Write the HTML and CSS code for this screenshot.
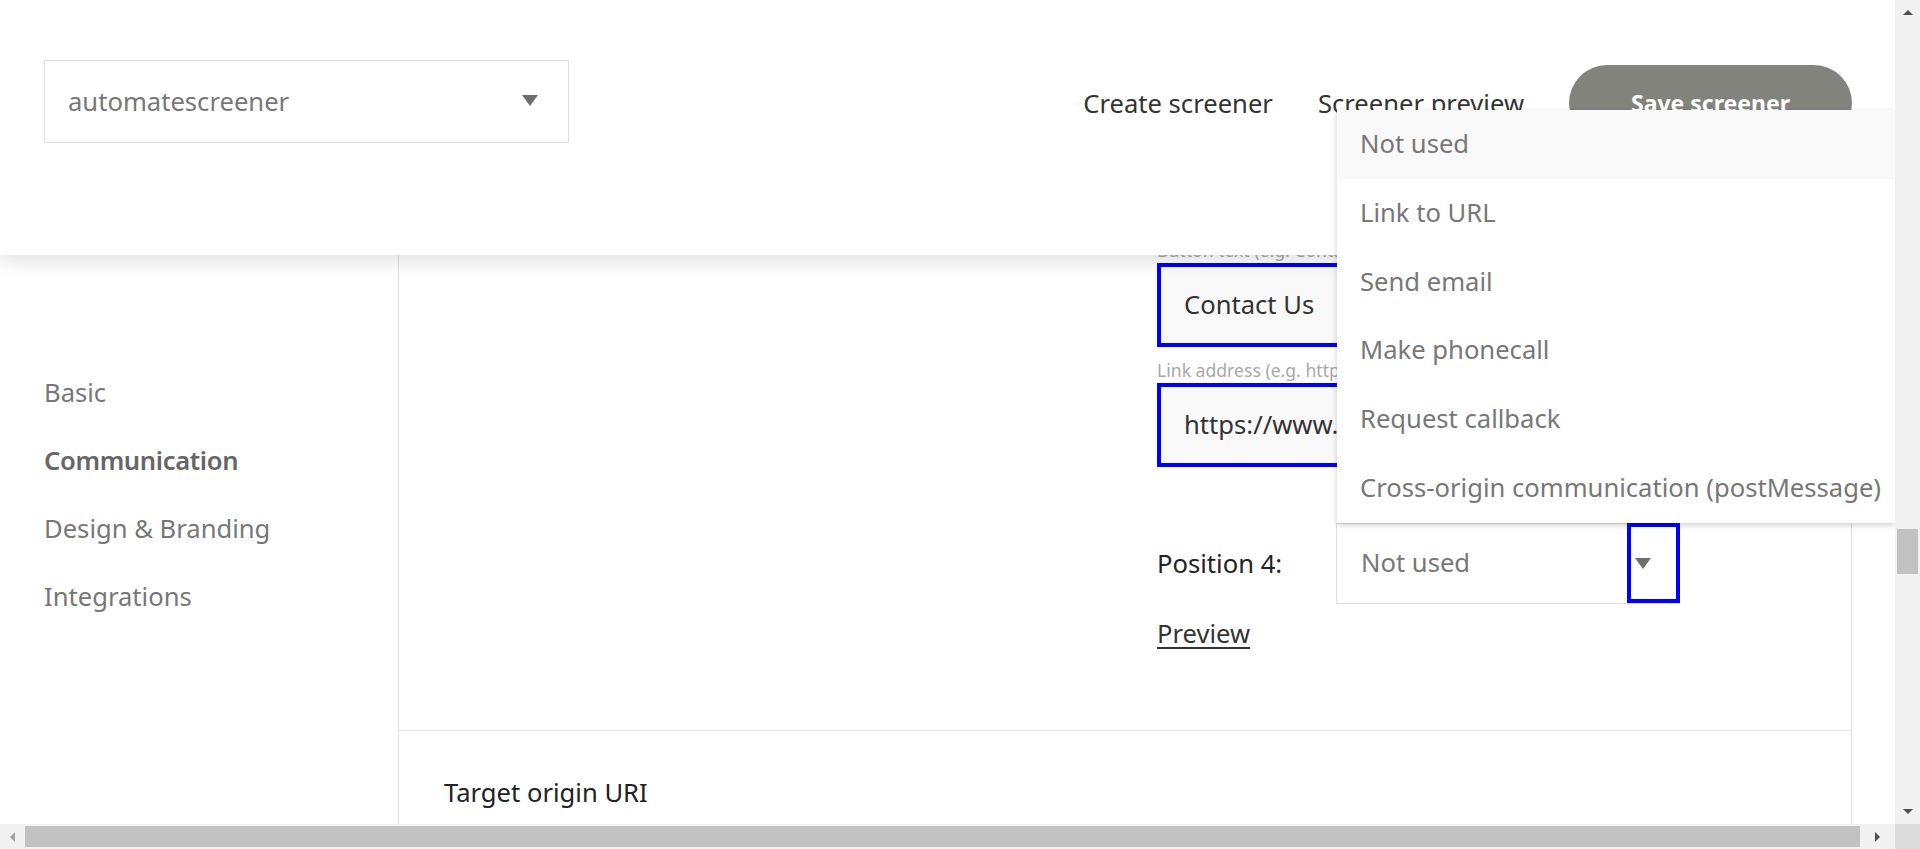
FILE: index.html
```html
<!DOCTYPE html>
<html lang="en">
<head>
<meta charset="utf-8">
<title>Screener - Communication</title>
<link rel="stylesheet" href="styles.css">
</head>
<body>
<div class="viewport">
  <div class="page">
    <nav class="sidebar">
      <div class="side-item">Basic</div>
      <div class="side-item active">Communication</div>
      <div class="side-item">Design &amp; Branding</div>
      <div class="side-item">Integrations</div>
    </nav>
    <main class="main">
      <section class="section form-section">
        <div class="form-col">
          <div class="field">
            <div class="field-label">Button text (e.g. Contact Us)</div>
            <div class="text-input focused">Contact Us</div>
          </div>
          <div class="field">
            <div class="field-label">Link address (e.g. https://www.example.com)</div>
            <div class="text-input focused">https://www.example.com/contact</div>
          </div>
          <div class="position-row">
            <div class="position-label">Position 4:</div>
            <div class="select">
              <span class="select-value">Not used</span>
              <span class="select-arrow"><span class="tri"></span></span>
            </div>
          </div>
          <a class="preview-link" href="#">Preview</a>
        </div>
      </section>
      <section class="section origin-section">
        <div class="origin-label">Target origin URI</div>
      </section>
    </main>
  </div>

  <header class="header">
    <div class="header-select">
      <span>automatescreener</span>
      <span class="tri"></span>
    </div>
    <div class="header-nav">
      <a class="nav-link" href="#">Create screener</a>
      <a class="nav-link" href="#">Screener preview</a>
      <button class="save-btn">Save screener</button>
    </div>
  </header>

  <ul class="menu">
    <li class="menu-item hover">Not used</li>
    <li class="menu-item">Link to URL</li>
    <li class="menu-item">Send email</li>
    <li class="menu-item">Make phonecall</li>
    <li class="menu-item">Request callback</li>
    <li class="menu-item">Cross-origin communication (postMessage)</li>
  </ul>
</div>

<div class="vscroll">
  <span class="arrow up"></span>
  <div class="vtrack"><div class="vthumb"></div></div>
  <span class="arrow down"></span>
</div>
<div class="hscroll">
  <span class="arrow left"></span>
  <div class="hthumb"></div>
  <span class="arrow right"></span>
</div>
<div class="corner"></div>
</body>
</html>
```

FILE: styles.css
```css
* { box-sizing: border-box; }
html, body { margin: 0; padding: 0; }
body {
  width: 1920px;
  height: 849px;
  overflow: hidden;
  display: grid;
  grid-template-columns: 1895px 25px;
  grid-template-rows: 824px 25px;
  font-family: "Noto Sans", "Open Sans", sans-serif;
  font-size: 25.6px;
  background: #fff;
}

.viewport {
  position: relative;
  overflow: hidden;
  background: #fff;
}

.page {
  display: flex;
  height: 100%;
}

.sidebar {
  width: 399px;
  flex: none;
  border-right: 1px solid #dcdcdc;
  padding: 359px 0 0 44px;
}
.side-item {
  height: 68px;
  line-height: 68px;
  color: #777;
}
.side-item.active {
  font-weight: 600;
  color: #666;
  letter-spacing: -0.35px;
}

.main {
  width: 1453px;
  flex: none;
  border-right: 1px solid #dcdcdc;
}

.form-section {
  height: 731px;
  border-bottom: 1px solid #e6e6e6;
  padding: 243px 0 0 758px;
}
.form-col { width: 560px; }

.field { margin-bottom: 16px; }
.field-label {
  height: 20px;
  line-height: 15px;
  font-size: 17.6px;
  color: #a8a8a8;
  white-space: nowrap;
}
.text-input {
  height: 84px;
  line-height: 76px;
  padding-left: 23px;
  background: #f9f9f9;
  color: #333;
  white-space: nowrap;
  overflow: hidden;
}
.text-input.focused { border: 4px solid #0000ff; }

.position-row {
  display: flex;
  align-items: center;
  margin-top: 56px;
  height: 81px;
}
.position-label {
  width: 179px;
  color: #222;
}
.select {
  width: 344px;
  height: 81px;
  border: 1px solid #dedede;
  display: flex;
  align-items: stretch;
}
.select-value {
  flex: 1;
  padding-left: 24px;
  line-height: 77px;
  color: #777;
}
.select-arrow {
  width: 53px;
  margin: -1px -1px 0 0;
  border: 4px solid #0000ff;
  display: flex;
  align-items: center;
  padding-left: 4px;
}
.tri {
  display: inline-block;
  width: 0;
  height: 0;
  border-left: 8px solid transparent;
  border-right: 8px solid transparent;
  border-top: 11px solid #6e6e6e;
}

.preview-link {
  display: inline-block;
  margin-top: 13px;
  line-height: 34px;
  color: #333;
  text-decoration: underline;
  text-underline-offset: 4px;
}

.origin-section { padding: 45px 0 0 45px; }
.origin-label {
  line-height: 34px;
  color: #222;
}

/* header overlay */
.header {
  position: absolute;
  top: 0;
  left: 0;
  right: 0;
  height: 255px;
  background: #fff;
  box-shadow: 0 6px 18px rgba(0, 0, 0, 0.13);
  z-index: 2;
  display: flex;
  justify-content: space-between;
  align-items: flex-start;
  padding: 60px 43px 0 44px;
}
.header-select {
  width: 525px;
  height: 83px;
  border: 1px solid #dedede;
  display: flex;
  align-items: center;
  justify-content: space-between;
  padding: 0 30px 0 23px;
  color: #777;
}
.header-select .tri { margin-top: -2px; }
.header-nav {
  display: flex;
  align-items: center;
  gap: 45px;
  padding-top: 5px;
}
.nav-link {
  color: #333;
  text-decoration: none;
}
.save-btn {
  width: 283px;
  height: 76px;
  border: none;
  border-radius: 38px;
  background: #83837e;
  color: #fff;
  font-family: inherit;
  font-size: 23px;
  font-weight: 700;
  padding: 0;
}

/* dropdown overlay */
.menu {
  position: absolute;
  top: 110px;
  left: 1337px;
  width: 558px;
  margin: 0;
  padding: 0;
  list-style: none;
  background: #fff;
  box-shadow: 0 2px 6px rgba(0, 0, 0, 0.2);
  z-index: 3;
}
.menu-item {
  height: 68.75px;
  line-height: 68.75px;
  padding-left: 23px;
  color: #777;
  white-space: nowrap;
}
.menu-item.hover { background: #f9f9f9; }

/* scrollbars */
.vscroll {
  background: #f1f1f1;
  display: flex;
  flex-direction: column;
  align-items: center;
}
.vtrack {
  flex: 1;
  width: 100%;
  position: relative;
}
.vthumb {
  position: absolute;
  top: 504px;
  left: 2px;
  width: 21px;
  height: 45px;
  background: #c1c1c1;
}
.hscroll {
  background: #f1f1f1;
  display: flex;
  align-items: center;
}
.hthumb {
  width: 1835px;
  height: 21px;
  background: #c1c1c1;
}
.arrow {
  width: 25px;
  height: 25px;
  flex: none;
  display: flex;
  align-items: center;
  justify-content: center;
}
.arrow::before {
  content: "";
  width: 0;
  height: 0;
}
.arrow.up::before {
  border-left: 5px solid transparent;
  border-right: 5px solid transparent;
  border-bottom: 5px solid #505050;
}
.arrow.down::before {
  border-left: 5px solid transparent;
  border-right: 5px solid transparent;
  border-top: 5px solid #505050;
}
.arrow.left::before {
  border-top: 5px solid transparent;
  border-bottom: 5px solid transparent;
  border-right: 5px solid #a3a3a3;
}
.arrow.right {
  width: 35px;
}
.arrow.right::before {
  border-top: 5px solid transparent;
  border-bottom: 5px solid transparent;
  border-left: 5px solid #505050;
}
.corner { background: #dcdcdc; }
```
